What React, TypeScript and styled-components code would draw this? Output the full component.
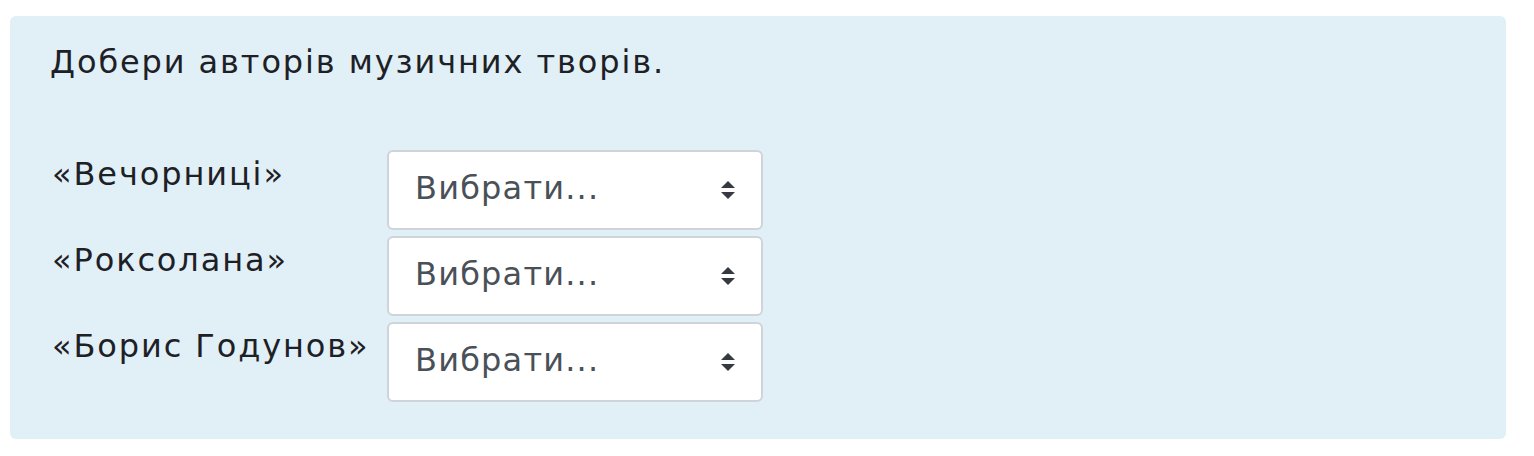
import styled, { createGlobalStyle } from "styled-components";

const ITEMS = ["«Вечорниці»", "«Роксолана»", "«Борис Годунов»"];

const App = () => {
  return (
    <>
      <GlobalStyle />
      <Panel>
        <Question>Добери авторів музичних творів.</Question>
        <Answers>
          {ITEMS.map((item) => (
            <Row key={item}>
              <Label>{item}</Label>
              <Select>
                <SelectText>Вибрати...</SelectText>
                <Arrows viewBox="0 0 16 20">
                  <path d="M8 1 L15 8 H1 Z" />
                  <path d="M8 19 L15 12 H1 Z" />
                </Arrows>
              </Select>
            </Row>
          ))}
        </Answers>
      </Panel>
    </>
  );
};

const GlobalStyle = createGlobalStyle`
  body {
    margin: 0;
    background: #fff;
    font-family: "DejaVu Sans", "Noto Sans", sans-serif;
    color: #1d2125;
  }
`;
const Panel = styled.div`
  margin: 16px 28px 18px 10px;
  padding: 22px 40px 37px;
  background-color: #e1eff7;
  border-radius: 6px;
`;
const Question = styled.p`
  margin: 0 0 64px;
  font-size: 32px;
  line-height: 48px;
  letter-spacing: 1.9px;
`;
const Answers = styled.div`
  display: grid;
  grid-template-columns: 337px auto;
  justify-content: start;
  row-gap: 6px;
`;
const Row = styled.div`
  display: contents;
`;
const Label = styled.div`
  font-size: 32px;
  line-height: 48px;
  letter-spacing: 1.9px;
  white-space: nowrap;
  padding: 0 0 0 2px;
`;
const Select = styled.div`
  box-sizing: border-box;
  width: 376px;
  height: 80px;
  display: flex;
  align-items: center;
  justify-content: space-between;
  padding: 0 25px 0 26px;
  background: #fff;
  border: 2px solid #ced4da;
  border-radius: 6px;
`;
const SelectText = styled.span`
  font-size: 32px;
  letter-spacing: 1.2px;
  color: #495057;
  margin-bottom: 5px;
`;
const Arrows = styled.svg`
  width: 16px;
  height: 20px;
  fill: #343a40;
`;

export default App;
